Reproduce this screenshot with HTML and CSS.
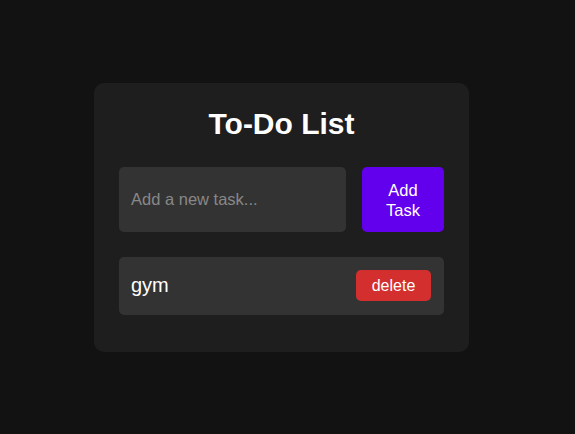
FILE: index.html
```html
<!DOCTYPE html>
<html lang="en">
<head>
<meta charset="utf-8">
<title>To-Do List</title>
<link rel="stylesheet" href="styles.css">
</head>
<body>
<div class="page">
  <div class="card">
    <h1 class="title">To-Do List</h1>
    <div class="entry">
      <input class="task-input" type="text" placeholder="Add a new task...">
      <button class="add-btn">Add Task</button>
    </div>
    <ul class="tasks">
      <li class="task">
        <span class="task-text">gym</span>
        <button class="delete-btn">delete</button>
      </li>
    </ul>
  </div>
</div>
</body>
</html>
```
FILE: styles.css
```css
html, body {
  margin: 0;
  padding: 0;
  background: #121212;
  font-family: "Liberation Sans", Arial, sans-serif;
  color: #fff;
}
.page {
  display: flex;
  justify-content: center;
  padding: 83px 12px 0 0;
}
.card {
  width: 375px;
  box-sizing: border-box;
  background: #1e1e1e;
  border-radius: 10px;
  padding: 25px 25px 37px;
}
.title {
  margin: 0 0 27px;
  font-size: 30px;
  line-height: 32px;
  font-weight: bold;
  text-align: center;
  color: #fff;
}
.entry {
  display: flex;
  gap: 16px;
  height: 65px;
}
.task-input {
  flex: 1;
  min-width: 0;
  box-sizing: border-box;
  background: #333;
  border: none;
  border-radius: 5px;
  padding: 0 12px;
  font-family: inherit;
  font-size: 16.5px;
  color: #fff;
  outline: none;
}
.task-input::placeholder {
  color: #888;
}
.add-btn {
  width: 82px;
  box-sizing: border-box;
  background: #6200ee;
  color: #fff;
  border: none;
  border-radius: 5px;
  padding: 0 10px;
  font-family: inherit;
  font-size: 16.5px;
  line-height: 20px;
}
.tasks {
  list-style: none;
  margin: 25px 0 0;
  padding: 0;
}
.task {
  display: flex;
  align-items: center;
  justify-content: space-between;
  height: 58px;
  box-sizing: border-box;
  background: #333;
  border-radius: 5px;
  padding: 0 13px 1px 12px;
}
.task-text {
  font-size: 20px;
  color: #fff;
}
.delete-btn {
  width: 75px;
  height: 31px;
  background: #d32f2f;
  color: #fff;
  border: none;
  border-radius: 5px;
  font-family: inherit;
  font-size: 16px;
  padding: 0;
}
```
